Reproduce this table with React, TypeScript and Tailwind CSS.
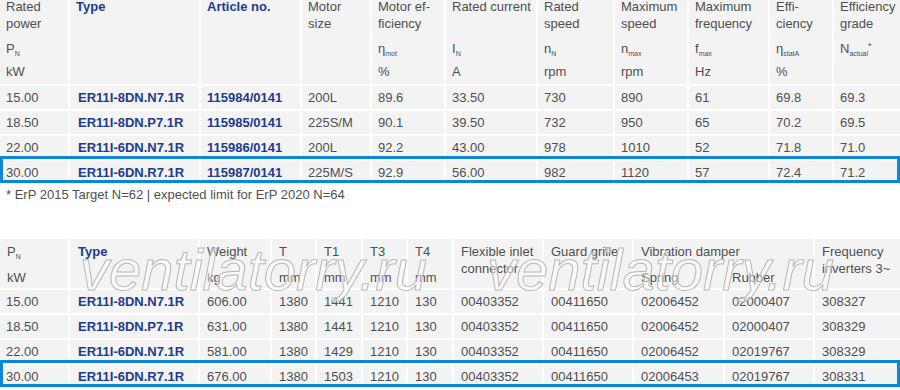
import React from "react";

type Sym = { base: string; sub?: string; sup?: string };

type Head = {
  label: string[];
  sym?: Sym;
  unit?: string;
  bold?: boolean;
};

const heads1: Head[] = [
  { label: ["Rated", "power"], sym: { base: "P", sub: "N" }, unit: "kW" },
  { label: ["Type"], bold: true },
  { label: ["Article no."], bold: true },
  { label: ["Motor", "size"] },
  { label: ["Motor ef-", "ficiency"], sym: { base: "η", sub: "mot" }, unit: "%" },
  { label: ["Rated current"], sym: { base: "I", sub: "N" }, unit: "A" },
  { label: ["Rated", "speed"], sym: { base: "n", sub: "N" }, unit: "rpm" },
  { label: ["Maximum", "speed"], sym: { base: "n", sub: "max" }, unit: "rpm" },
  { label: ["Maximum", "frequency"], sym: { base: "f", sub: "max" }, unit: "Hz" },
  { label: ["Effi-", "ciency"], sym: { base: "η", sub: "statA" }, unit: "%" },
  { label: ["Efficiency", "grade"], sym: { base: "N", sub: "actual", sup: "*" } },
];

const rows1 = [
  ["15.00", "ER11I-8DN.N7.1R", "115984/0141", "200L", "89.6", "33.50", "730", "890", "61", "69.8", "69.3"],
  ["18.50", "ER11I-8DN.P7.1R", "115985/0141", "225S/M", "90.1", "39.50", "732", "950", "65", "70.2", "69.5"],
  ["22.00", "ER11I-6DN.N7.1R", "115986/0141", "200L", "92.2", "43.00", "978", "1010", "52", "71.8", "71.0"],
  ["30.00", "ER11I-6DN.R7.1R", "115987/0141", "225M/S", "92.9", "56.00", "982", "1120", "57", "72.4", "71.2"],
];

const rows2 = [
  ["15.00", "ER11I-8DN.N7.1R", "606.00", "1380", "1441", "1210", "130", "00403352", "00411650", "02006452", "02000407", "308327"],
  ["18.50", "ER11I-8DN.P7.1R", "631.00", "1380", "1441", "1210", "130", "00403352", "00411650", "02006452", "02000407", "308329"],
  ["22.00", "ER11I-6DN.N7.1R", "581.00", "1380", "1429", "1210", "130", "00403352", "00411650", "02006452", "02019767", "308329"],
  ["30.00", "ER11I-6DN.R7.1R", "676.00", "1380", "1503", "1210", "130", "00403352", "00411650", "02006453", "02019767", "308331"],
];

const grid1 = "grid grid-cols-[68px_129px_99px_68px_72px_90px_75px_72px_79px_62px_66px] gap-x-[2px]";
const grid2 = "grid grid-cols-[68px_128px_70px_43px_44px_43px_44px_88px_88px_89px_88px_85px] gap-x-[2px]";
const blueText = "font-bold text-[#1e3b8c]";

function Symbol({ s }: { s: Sym }) {
  return (
    <span>
      {s.base}
      <span className="relative top-[3px] text-[7px]">{s.sub}</span>
      {s.sup && <span className="relative -top-[4px] text-[9px]">{s.sup}</span>}
    </span>
  );
}

function Highlight() {
  // blue frame drawn over the selected row
  return <div className="pointer-events-none absolute left-0 right-0 -top-[5px] bottom-[1px] border-[3px] border-[#0a88d6]" />;
}

function TopTable() {
  return (
    <div className="flex flex-col gap-y-[2px]">
      <div className={grid1}>
        {heads1.map((h, i) => (
          <div key={i} className="h-[84px] bg-[#f3f3f3] pl-[6px]">
            <div className={`-mt-[2px] h-[39px] leading-[17px] ${h.bold ? blueText : ""}`}>
              {h.label.map((l) => (
                <div key={l}>{l}</div>
              ))}
            </div>
            <div className="h-[24px] leading-[24px]">{h.sym && <Symbol s={h.sym} />}</div>
            <div className="leading-[22px]">{h.unit}</div>
          </div>
        ))}
      </div>
      {rows1.map((r, ri) => (
        <div key={ri} className={`relative ${grid1}`}>
          {r.map((c, ci) => (
            <div
              key={ci}
              className={`h-[23px] bg-[#f3f3f3] pl-[6px] leading-[23px] whitespace-nowrap ${ci === 1 ? "pl-[8px]" : ""} ${ci === 1 || ci === 2 ? blueText : ""}`}
            >
              {c}
            </div>
          ))}
          {ri === 3 && <Highlight />}
        </div>
      ))}
    </div>
  );
}

function HeadCell({ label, unit, bold }: { label: React.ReactNode; unit?: React.ReactNode; bold?: boolean }) {
  return (
    <div className="h-[49px] bg-[#f3f3f3] pl-[7px] pt-[4px]">
      <div className={`h-[26px] leading-[17px] ${bold ? blueText : ""}`}>{label}</div>
      <div className="leading-[17px]">{unit}</div>
    </div>
  );
}

function BottomTable() {
  return (
    <div className="flex flex-col gap-y-[2px]">
      <div className={grid2}>
        <HeadCell label={<Symbol s={{ base: "P", sub: "N" }} />} unit="kW" />
        <div className="h-[49px] bg-[#f3f3f3] pl-[8px] pt-[4px]">
          <div className={`leading-[17px] ${blueText}`}>Type</div>
        </div>
        <HeadCell label="Weight" unit="kg" />
        <HeadCell label="T" unit="mm" />
        <HeadCell label="T1" unit="mm" />
        <HeadCell label="T3" unit="mm" />
        <HeadCell label="T4" unit="mm" />
        <HeadCell
          label={
            <>
              <div>Flexible inlet</div>
              <div>connector</div>
            </>
          }
        />
        <HeadCell label="Guard grille" />
        <div className="col-span-2 h-[49px] bg-[#f3f3f3] pt-[4px]">
          <div className="h-[26px] pl-[7px] leading-[17px]">Vibration damper</div>
          <div className="grid grid-cols-[89px_88px] gap-x-[2px] leading-[17px]">
            <div className="pl-[7px]">Spring</div>
            <div className="pl-[7px]">Rubber</div>
          </div>
        </div>
        <HeadCell
          label={
            <>
              <div>Frequency</div>
              <div>inverters 3~</div>
            </>
          }
        />
      </div>
      {rows2.map((r, ri) => (
        <div key={ri} className={`relative ${grid2}`}>
          {r.map((c, ci) => (
            <div
              key={ci}
              className={`h-[23px] bg-[#f3f3f3] leading-[23px] whitespace-nowrap ${ci === 0 ? "pl-[6px]" : ci === 1 ? "pl-[8px]" : "pl-[7px]"} ${ci === 1 ? blueText : ""}`}
            >
              {c}
            </div>
          ))}
          {ri === 3 && <Highlight />}
        </div>
      ))}
    </div>
  );
}

export default function App() {
  return (
    <div className="relative h-[390px] w-[900px] overflow-hidden bg-white font-['Liberation_Sans',Arial,sans-serif] text-[13px] text-[#4f4f4f]">
      <TopTable />
      <div className="mt-[2px] pl-[6px] leading-[17px]">* ErP 2015 Target N=62 | expected limit for ErP 2020 N=64</div>
      <div className="mt-[36px]">
        <BottomTable />
      </div>

      {/* watermarks */}
      <span className="pointer-events-none absolute left-[80px] top-[241px] text-[58px] italic leading-[58px] text-[rgba(255,255,255,0.45)] [-webkit-text-stroke:1px_#b8b8b8]">
        ventilatorry.ru
      </span>
      <span className="pointer-events-none absolute left-[487px] top-[241px] text-[58px] italic leading-[58px] text-[rgba(255,255,255,0.45)] [-webkit-text-stroke:1px_#b8b8b8]">
        ventilatorry.ru
      </span>
    </div>
  );
}
